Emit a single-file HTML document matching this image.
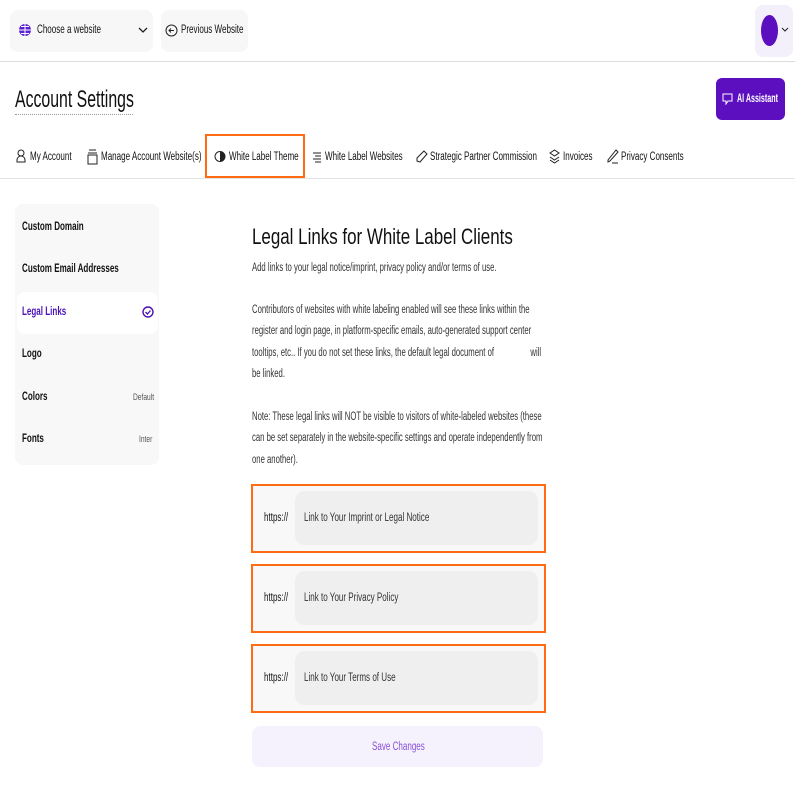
<!DOCTYPE html>
<html><head><style>
*{box-sizing:border-box;margin:0;padding:0}
body{width:795px;height:795px;background:#fff;font-family:"Liberation Sans",sans-serif;color:#111;position:relative;overflow:hidden}
.a{position:absolute}
.n{position:absolute;white-space:nowrap;transform:scaleX(.7);transform-origin:0 0}
.box{background:#f7f7f7;border-radius:8px}
.tab{top:151px;font-size:11.5px}
.ic{position:absolute;top:149px}
.side{left:22px;font-size:11.5px;font-weight:bold;color:#111}
.p{position:absolute;left:252px;top:0;font-size:11.5px;line-height:21.3px;color:#333;width:440px;transform:scaleX(.67);transform-origin:0 0;white-space:normal}
.ob{position:absolute;left:251px;width:295px;height:69px;border:2px solid #ff6a13;background:#f8f8f8}
.ob .h{left:11px;top:26px;font-size:11.5px}
.ob .in{position:absolute;left:42px;top:5px;width:243px;height:54px;background:#efefef;border-radius:10px}
.ob .ph{left:51px;top:26px;font-size:11.5px;color:#333}
</style></head><body>
<div class="a box" style="left:10px;top:10px;width:143px;height:42px"></div>
<svg class="a" style="left:18px;top:23px" width="14" height="14" viewBox="0 0 14 14"><circle cx="7" cy="7" r="6" fill="#5a1fd1"/><path d="M1 7h12M7 1v12M3 3.5h8M3 10.5h8" stroke="#fff" stroke-width="1"/></svg>
<div class="n" style="left:37px;top:24px;font-size:11.5px">Choose a website</div>
<svg class="a" style="left:138px;top:27px" width="10" height="7"><path d="M1 1l4 4 4-4" stroke="#222" fill="none" stroke-width="1.3"/></svg>
<div class="a box" style="left:161px;top:10px;width:87px;height:42px"></div>
<svg class="a" style="left:165px;top:24px" width="13" height="13"><circle cx="6.5" cy="6.5" r="5.5" stroke="#222" fill="none"/><path d="M9 6.5H4M6 4.5l-2 2 2 2" stroke="#222" fill="none"/></svg>
<div class="n" style="left:181px;top:24px;font-size:11.5px">Previous Website</div>
<div class="a" style="left:755px;top:5px;width:38px;height:52px;background:#f4f0fb;border-radius:8px"></div>
<div class="a" style="left:761px;top:15px;width:17px;height:31px;background:#5b0fbf;border-radius:50%"></div>
<svg class="a" style="left:781px;top:27px" width="8" height="6"><path d="M1 1l3 3 3-3" stroke="#222" fill="none"/></svg>
<div class="a" style="left:0;top:61px;width:795px;height:1px;background:#ddd"></div>
<div class="n" style="left:15px;top:86px;font-size:24px;transform:scaleX(.66)">Account Settings</div>
<div class="a" style="left:15px;top:114px;width:118px;border-bottom:1px dotted #999"></div>
<div class="a" style="left:716px;top:78px;width:69px;height:42px;background:#5b0fbf;border-radius:6px"></div>
<svg class="a" style="left:722px;top:93px" width="11" height="12"><path d="M1 1h9v7H6l-2 3V8H1z" stroke="#fff" fill="none"/></svg>
<div class="n" style="left:737px;top:93px;color:#fff;font-size:11.5px;font-weight:bold;transform:scaleX(.62)">AI Assistant</div>

<svg class="ic" style="left:16px" width="10" height="14"><circle cx="5" cy="4" r="3" stroke="#222" fill="none"/><path d="M1 13v-2a4 4 0 018 0v2z" stroke="#222" fill="none"/></svg>
<div class="n tab" style="left:30px">My Account</div>
<svg class="ic" style="left:87px" width="11" height="16"><path d="M2 1h7M1 4h9M1 6h9v9H1z" stroke="#222" fill="none"/></svg>
<div class="n tab" style="left:101px">Manage Account Website(s)</div>
<div class="a" style="left:205px;top:134px;width:100px;height:44px;border:2px solid #ff6a13"></div>
<svg class="ic" style="left:214px;top:150px" width="12" height="13"><circle cx="6" cy="6.5" r="5" stroke="#222" fill="none"/><path d="M6 1.5a5 5 0 010 10z" fill="#222"/></svg>
<div class="n tab" style="left:229px">White Label Theme</div>
<svg class="ic" style="left:312px;top:151px" width="10" height="12"><path d="M1 2h8M3 5h6M1 8h8M3 11h6" stroke="#222"/></svg>
<div class="n tab" style="left:325px">White Label Websites</div>
<svg class="ic" style="left:416px;top:150px" width="12" height="13"><path d="M8 1l3 3-7 8-3-1 0-3z" stroke="#222" fill="none"/></svg>
<div class="n tab" style="left:430px">Strategic Partner Commission</div>
<svg class="ic" style="left:549px" width="11" height="15"><path d="M1 4l4.5-3 4.5 3-4.5 3zM1 8l4.5 3 4.5-3M1 11l4.5 3 4.5-3" stroke="#222" fill="none"/></svg>
<div class="n tab" style="left:563px">Invoices</div>
<svg class="ic" style="left:607px" width="12" height="15"><path d="M9 1l2 2-8 9-2 1 0-2zM5 14h6" stroke="#222" fill="none"/></svg>
<div class="n tab" style="left:621px">Privacy Consents</div>
<div class="a" style="left:0;top:178px;width:795px;height:1px;background:#e3e3e3"></div>

<div class="a" style="left:15px;top:204px;width:144px;height:261px;background:#f8f8f8;border-radius:8px"></div>
<div class="a" style="left:17px;top:292px;width:141px;height:42px;background:#fff;border-radius:8px"></div>
<div class="n side" style="top:221px">Custom Domain</div>
<div class="n side" style="top:263px">Custom Email Addresses</div>
<div class="n side" style="top:306px;color:#4a12b5">Legal Links</div>
<svg class="a" style="left:142px;top:306px" width="12" height="12"><circle cx="6" cy="6" r="5" stroke="#4a12b5" stroke-width="1.4" fill="none"/><path d="M3.5 6l2 2 3-3.5" stroke="#4a12b5" stroke-width="1.3" fill="none"/></svg>
<div class="n side" style="top:348px">Logo</div>
<div class="n side" style="top:391px">Colors</div>
<div class="n" style="left:133px;top:392px;font-size:9.5px;color:#555">Default</div>
<div class="n side" style="top:433px">Fonts</div>
<div class="n" style="left:139px;top:434px;font-size:9.5px;color:#555">Inter</div>

<div class="n" style="left:252px;top:224px;font-size:22px;transform:scaleX(.77)">Legal Links for White Label Clients</div>
<div class="p" style="top:258px">Add links to your legal notice/imprint, privacy policy and/or terms of use.</div>
<div class="p" style="top:300px">Contributors of websites with white labeling enabled will see these links within the register and login page, in platform-specific emails, auto-generated support center tooltips, etc.. If you do not set these links, the default legal document of &nbsp; &nbsp; &nbsp; &nbsp; &nbsp; &nbsp; &nbsp; &nbsp; will be linked.</div>
<div class="p" style="top:407px">Note: These legal links will NOT be visible to visitors of white-labeled websites (these can be set separately in the website-specific settings and operate independently from one another).</div>

<div class="ob" style="top:484px"><div class="n h">https://</div><div class="in"></div><div class="n ph">Link to Your Imprint or Legal Notice</div></div>
<div class="ob" style="top:564px"><div class="n h">https://</div><div class="in"></div><div class="n ph">Link to Your Privacy Policy</div></div>
<div class="ob" style="top:644px"><div class="n h">https://</div><div class="in"></div><div class="n ph">Link to Your Terms of Use</div></div>
<div class="a" style="left:252px;top:726px;width:291px;height:41px;background:#f5f2fd;border-radius:8px"></div>
<div class="n" style="left:372px;top:741px;font-size:11.5px;color:#8a4fd8">Save Changes</div>
</body></html>
